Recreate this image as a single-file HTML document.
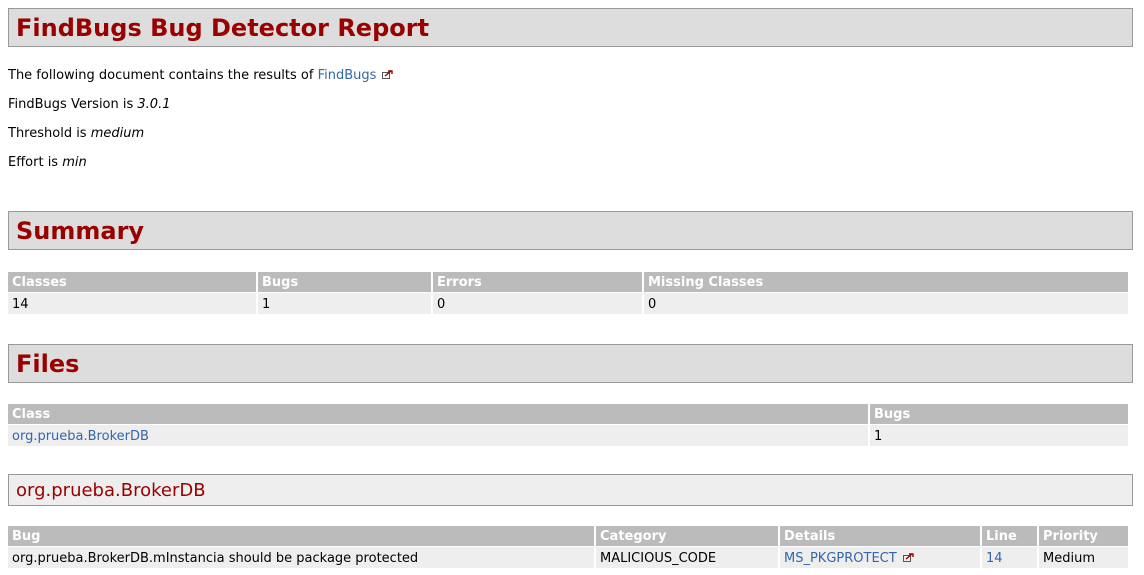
<!DOCTYPE html>
<html><head><meta charset="utf-8"><style>
body{margin:0;font-family:Verdana,"DejaVu Sans",sans-serif;font-size:13px;color:#000;background:#fff;}
.h{position:absolute;left:8px;width:1125px;background:#ddd;border:1px solid #999;color:#900;font-weight:bold;box-sizing:border-box;}
.h span{position:absolute;left:7px;}
p{position:absolute;left:8px;margin:0;line-height:15px;}
a{color:#36a;text-decoration:none;}
table{position:absolute;left:8px;width:1120px;border-collapse:separate;border-spacing:0;}
td,th{padding:1px 4px 0;text-align:left;border-right:2px solid #fff;box-sizing:border-box;white-space:nowrap;}
td:last-child,th:last-child{border-right:0}
th{background:#bbb;color:#fff;font-weight:bold;height:21px;border-bottom:1px solid #fff;}
td{background:#eee;height:21px;}
.ext{display:inline-block;width:11px;height:9px;margin-left:6px;vertical-align:0px}
</style></head><body>
<div class="h" style="top:8px;height:39px;font-size:24px"><span style="top:5px">FindBugs Bug Detector Report</span></div>
<p style="top:68px">The following document contains the results of <a>FindBugs</a><svg class="ext" viewBox="0 0 11 9"><rect x="0.5" y="2.5" width="7" height="6" fill="none" stroke="#555"/><path d="M3 6 L9 1 M6 1 H10 V4" stroke="#900" stroke-width="1.4" fill="none"/></svg></p>
<p style="top:97px">FindBugs Version is <i>3.0.1</i></p>
<p style="top:126px">Threshold is <i>medium</i></p>
<p style="top:155px">Effort is <i>min</i></p>
<div class="h" style="top:211px;height:39px;font-size:24px"><span style="top:5px">Summary</span></div>
<table style="top:272px"><tr><th style="width:250px">Classes</th><th style="width:175px">Bugs</th><th style="width:211px">Errors</th><th>Missing Classes</th></tr>
<tr><td>14</td><td>1</td><td>0</td><td>0</td></tr></table>
<div class="h" style="top:344px;height:39px;font-size:24px"><span style="top:5px">Files</span></div>
<table style="top:404px"><tr><th style="width:862px">Class</th><th>Bugs</th></tr>
<tr><td><a>org.prueba.BrokerDB</a></td><td>1</td></tr></table>
<div class="h" style="top:474px;height:32px;font-size:18px;font-weight:normal;background:#eee"><span style="top:5px">org.prueba.BrokerDB</span></div>
<table style="top:526px"><tr><th style="width:588px">Bug</th><th style="width:184px">Category</th><th style="width:202px">Details</th><th style="width:57px">Line</th><th>Priority</th></tr>
<tr><td>org.prueba.BrokerDB.mInstancia should be package protected</td><td>MALICIOUS_CODE</td><td><a>MS_PKGPROTECT</a><svg class="ext" viewBox="0 0 11 9"><rect x="0.5" y="2.5" width="7" height="6" fill="none" stroke="#555"/><path d="M3 6 L9 1 M6 1 H10 V4" stroke="#900" stroke-width="1.4" fill="none"/></svg></td><td><a>14</a></td><td>Medium</td></tr></table>
</body></html>
